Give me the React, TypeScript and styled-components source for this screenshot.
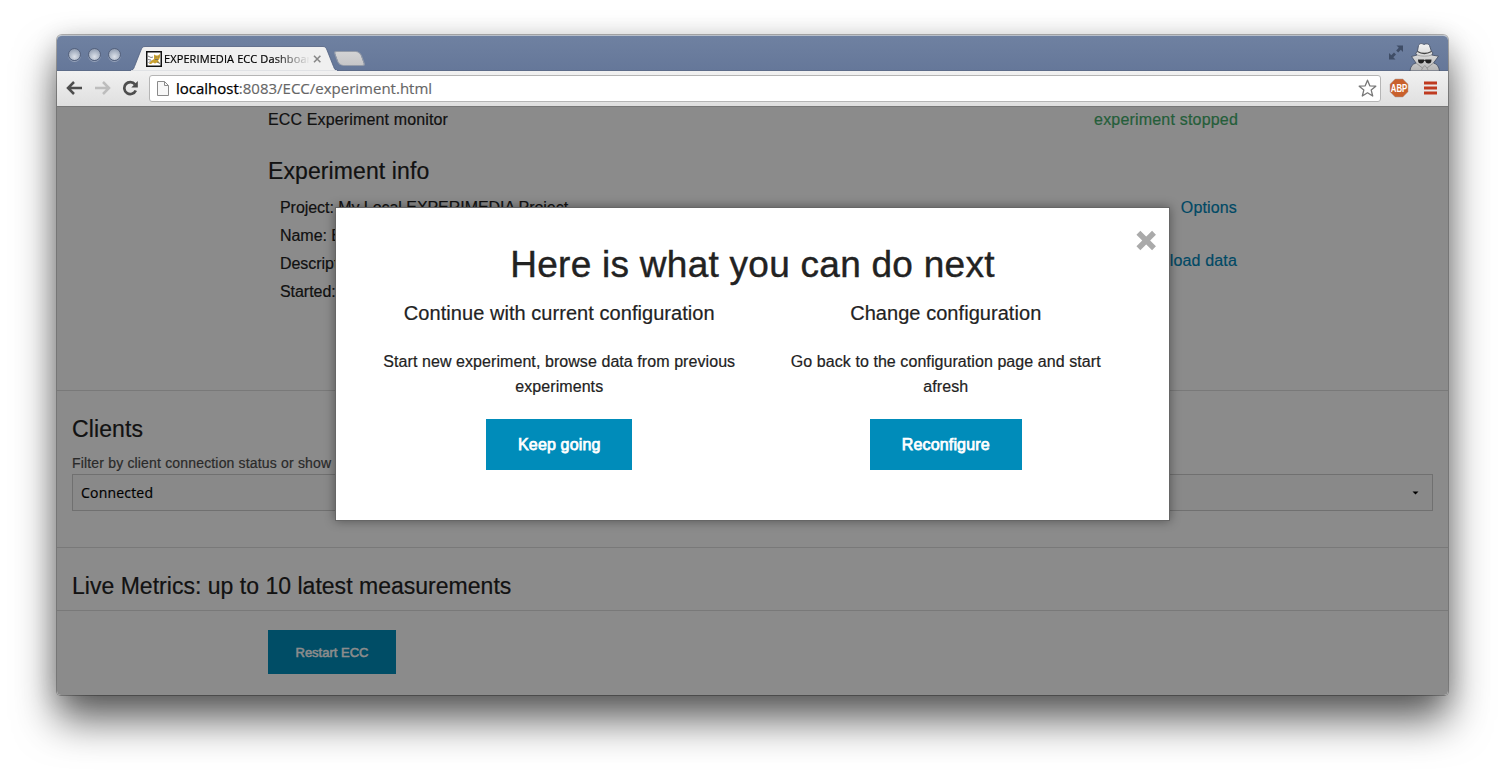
import React from 'react';
import styled, { createGlobalStyle } from 'styled-components';

const helvetica = `'Liberation Sans', Arial, sans-serif`;
const lucida = `'Open Sans', sans-serif`;

const GlobalStyle = createGlobalStyle`
  * { box-sizing: border-box; }
  body { margin: 0; background: #fff; overflow: hidden; font-family: ${helvetica}; }
`;

const Desktop = styled.div`
  width: 1505px;
  height: 774px;
  padding: 35px 57px 0;
  overflow: hidden;
`;

const Window = styled.div`
  display: flex;
  flex-direction: column;
  width: 1391px;
  height: 660px;
  border-radius: 5px 5px 4px 4px;
  box-shadow: 0 0 0 1px rgba(0, 0, 0, 0.28), 0 25px 42px rgba(0, 0, 0, 0.62), 0 4px 26px rgba(0, 0, 0, 0.16);
`;

const TitleBar = styled.div`
  display: flex;
  height: 36px;
  flex: none;
  border-radius: 5px 5px 0 0;
  border-top: 1px solid #b9c0ca;
  background: linear-gradient(#6f81a1, #657799);
  box-shadow: inset 0 -1px 0 #5d6c89;
`;

const Lights = styled.div`
  display: flex;
  gap: 7px;
  padding: 12px 0 0 11px;
  width: 73px;
`;

const Light = styled.i`
  width: 13px;
  height: 13px;
  border-radius: 50%;
  border: 1px solid #55627d;
  background: radial-gradient(circle at 50% 70%, #dce1e9 0, #abb5c5 55%, #7f8ba2 100%);
  box-shadow: 0 1px 0 rgba(255, 255, 255, 0.3);
`;

const Tab = styled.div`
  position: relative;
  width: 208px;
  height: 35px;
`;

const TabShape = styled.svg`
  position: absolute;
  left: 0;
  top: 10px;
`;

const TabContent = styled.div`
  position: relative;
  display: flex;
  align-items: center;
  padding: 14px 0 0 16px;
  height: 31px;
`;

const TabTitle = styled.span`
  width: 145px;
  margin-left: 2px;
  overflow: hidden;
  white-space: nowrap;
  font: 11px/17px ${lucida};
  letter-spacing: 0.1px;
  color: #000;
  -webkit-text-stroke: 0.2px #000;
  mask-image: linear-gradient(90deg, #000 110px, transparent 146px);
`;

const NewTab = styled.div`
  width: 27px;
  height: 15px;
  margin: 15px 0 0 -2px;
  border: 1px solid #949ba8;
  border-radius: 3px 5px 3px 5px;
  background: linear-gradient(#d3d3d4, #c6c6c8);
  transform: skewX(20deg);
`;

const TitleRight = styled.div`
  display: flex;
  margin-left: auto;
  padding: 7px 7px 0 0;
  gap: 4px;
`;

const ToolBar = styled.div`
  display: flex;
  align-items: center;
  height: 36px;
  flex: none;
  padding: 0 10px 1px 9px;
  background: linear-gradient(#f1f1f1, #dfdfdf);
  border-bottom: 1px solid #777;
`;

const NavIcons = styled.div`
  display: flex;
  gap: 11px;
  width: 83px;
`;

const UrlBox = styled.div`
  display: flex;
  align-items: center;
  width: 1232px;
  height: 27px;
  padding: 0 3px 0 7px;
  border: 1px solid #b5b5b5;
  border-radius: 3px;
  background: #fff;
`;

const Url = styled.span`
  margin-left: 7px;
  flex: 1;
  font: 15px/24px ${lucida};
  color: #666;
  -webkit-text-stroke: 0.15px #666;
  b { font-weight: 400; color: #000; -webkit-text-stroke: 0.25px #000; }
`;

const Extensions = styled.div`
  display: flex;
  align-items: center;
  margin-left: 8px;
  gap: 15px;
`;

const Page = styled.main`
  position: relative;
  flex: 1;
  overflow: hidden;
  border-radius: 0 0 4px 4px;
  background: #fefefe;
  color: #222;
  -webkit-text-stroke-width: 0.2px;
`;

const Section = styled.section<{ $h: number; $line?: boolean }>`
  display: flow-root;
  height: ${p => p.$h}px;
  padding: 0 15px;
  border-bottom: ${p => (p.$line === false ? 'none' : '1px solid #ddd')};
`;

const Row = styled.div`
  width: 999px;
  margin: 0 auto;
  padding: 0 14px 0 15px;
`;

const StatusBar = styled.div`
  display: flex;
  justify-content: space-between;
  font-size: 16px;
  line-height: 25px;
  letter-spacing: 0.14px;
`;

const Status = styled.span`
  color: #43ac6a;
  letter-spacing: 0.19px;
`;

const Heading = styled.h4<{ $mt: number; $ls?: number }>`
  margin: ${p => p.$mt}px 0 0;
  font-weight: 400;
  font-size: 23px;
  line-height: 32px;
  letter-spacing: ${p => p.$ls ?? 0.1}px;
`;

const InfoGrid = styled.div`
  display: flex;
  justify-content: space-between;
  margin-top: 7px;
  padding-left: 12px;
  font-size: 16px;
`;

const InfoList = styled.div`
  line-height: 28px;
  letter-spacing: -0.05px;
`;

const Links = styled.div`
  display: flex;
  flex-direction: column;
  align-items: flex-end;
  gap: 25px;
  padding-right: 1px;
  line-height: 28px;
  letter-spacing: 0.15px;
  color: #0086b8;
`;

const Label = styled.div`
  margin-top: 7px;
  font-size: 14px;
  line-height: 22px;
  letter-spacing: 0.17px;
  color: #4d4d4d;
`;

const Select = styled.div`
  display: flex;
  align-items: center;
  justify-content: space-between;
  height: 37px;
  padding: 0 13px 0 8px;
  border: 1px solid #ccc;
  background: #fafafa;
  color: #000;
  font: 14px/20px ${lucida};
  letter-spacing: 0.2px;
`;

const Button = styled.button<{ $small?: boolean }>`
  display: block;
  height: ${p => (p.$small ? 44 : 51)}px;
  padding: 0 ${p => (p.$small ? 27.5 : 32)}px;
  border: 0;
  background: #008cba;
  color: #fff;
  font: ${p => (p.$small ? 13 : 16)}px ${helvetica};
  letter-spacing: ${p => (p.$small ? 0 : 0.15)}px;
  -webkit-text-stroke: ${p => (p.$small ? 0.5 : 0.75)}px #fff;
`;

const Footer = styled.div`
  padding-top: 19px;
`;

const Overlay = styled.div`
  position: absolute;
  inset: 0;
  background: rgba(0, 0, 0, 0.45);
`;

const Modal = styled.div`
  position: absolute;
  left: 278px;
  top: 100px;
  width: 835px;
  height: 314px;
  padding: 35px 30px 0;
  background: #fff;
  border: 1px solid #666;
  box-shadow: 0 0 10px rgba(0, 0, 0, 0.4);
  text-align: center;
`;

const ModalTitle = styled.h2`
  margin: 0;
  font-weight: 400;
  font-size: 37px;
  line-height: 44px;
  letter-spacing: 0.26px;
  -webkit-text-stroke-width: 0.4px;
`;

const Close = styled.svg`
  position: absolute;
  right: 12px;
  top: 22px;
`;

const Columns = styled.div`
  display: grid;
  grid-template-columns: 1fr 1fr;
`;

const Option = styled.div`
  display: flex;
  flex-direction: column;
  align-items: center;
  h5 {
    margin: 12px 0 22px;
    font-weight: 400;
    font-size: 20px;
    line-height: 28px;
    letter-spacing: 0.05px;
  }
  p {
    margin: 0 0 20px;
    width: 357px;
    font-size: 16px;
    line-height: 25px;
    letter-spacing: 0.07px;
  }
`;

const options = [
  { title: 'Continue with current configuration', text: 'Start new experiment, browse data from previous experiments', action: 'Keep going' },
  { title: 'Change configuration', text: 'Go back to the configuration page and start afresh', action: 'Reconfigure' },
];

const Favicon = () => (
  <svg width="16" height="16" viewBox="0 0 16 16">
    <rect x=".75" y=".75" width="14.5" height="14.5" fill="#fff" stroke="#111" strokeWidth="1.5" />
    <path d="M3 13l2-3 3-2V3.500l2 1h2l2-1.500v3L13 8.500l-1 1 2 3-3-1-2 1-2-1-2 1.500z" fill="#c9a02e" />
    <path d="M2 5l3 1.500L7 6M2 8.500l3 .5M2.500 12L5 9.500M9.500 6h1M12 6h.8M9 8.500h3M11 11l3 1.500" stroke="#666" strokeWidth=".8" fill="none" />
  </svg>
);

const Incognito = () => (
  <svg width="32" height="28" viewBox="0 0 32 28">
    <defs>
      <linearGradient id="coat" x1="0" y1="0" x2="0" y2="1">
        <stop offset="0" stopColor="#f4f4f4" />
        <stop offset="1" stopColor="#b4b4b4" />
      </linearGradient>
    </defs>
    <path d="M1 28c.3-4.500 2.500-7 6-8L2.500 13.500 8 12l-1.500-2 1.800-1.200L9.500 2.500C11-.3 13 .5 15 1.500c2-1 4.500-1.200 5.500 1L22.500 8.500l1.500 1.300L22.800 12l6.700 1.200L24.500 20c3.500 1 5.500 3.500 6 8z" fill="url(#coat)" stroke="#4a5468" strokeWidth=".9" />
    <path d="M8.500 8.500c4 2.400 9.500 2.400 14 0" stroke="#444" strokeWidth="1.300" fill="none" />
    <path d="M8 12c4 1.600 11 1.600 15 0" stroke="#999" strokeWidth=".8" fill="none" />
    <path d="M9 16.500h5.800l.9.600.9-.6h5.900c0 3-1 4-3 4s-3-1.200-3.300-2.700h-1c-.3 1.500-1.200 2.700-3.200 2.700s-3-1-3-4z" fill="#222" />
    <path d="M7 20l6.500 5 2.300-2.500L18 25l6.500-5M12 28l1.500-3M19.500 28L18 25" stroke="#8a8a8a" strokeWidth=".8" fill="none" />
  </svg>
);

export default function App() {
  return (
    <Desktop>
      <GlobalStyle />
      <Window>
        <TitleBar>
          <Lights><Light /><Light /><Light /></Lights>
          <Tab>
            <TabShape width="208" height="25" viewBox="0 0 208 25">
              <path d="M0 24.500c3 0 3.500-1.500 4.500-4L11 4c1-2.500 2-3.500 4-3.500h178c2 0 3 1 4 3.500l6.500 16.500c1 2.500 1.500 4 4.500 4V25H0z" fill="#f0f0f0" stroke="#50607f" strokeWidth=".8" />
              <path d="M1 25h206" stroke="#f0f0f0" strokeWidth="1.500" />
            </TabShape>
            <TabContent>
              <Favicon />
              <TabTitle>EXPERIMEDIA ECC Dashboard</TabTitle>
              <svg width="16" height="8" viewBox="0 0 16 8"><path d="M5 .8l6.400 6.400M11.400.8L5 7.200" stroke="#888" strokeWidth="1.600" /></svg>
            </TabContent>
          </Tab>
          <NewTab />
          <TitleRight>
            <svg width="18" height="18" viewBox="0 0 18 18" fill="#3f4d66">
              <path d="M9.500 2.500H16V9l-2.200-2.200-2.600 2.600-2-2 2.600-2.600z" />
              <path d="M2 10v6.500h6.500l-2.200-2.200L9 11.600l-2-2-2.700 2.600z" />
            </svg>
            <Incognito />
          </TitleRight>
        </TitleBar>
        <ToolBar>
          <NavIcons>
            <svg width="17" height="16" viewBox="0 0 17 16" fill="none" stroke="#4d4d4d" strokeWidth="2.500"><path d="M8 2L2 8l6 6M2.500 8H16" /></svg>
            <svg width="17" height="16" viewBox="0 0 17 16" fill="none" stroke="#bdbdbd" strokeWidth="2.500"><path d="M9 2l6 6-6 6M14.500 8H1" /></svg>
            <svg width="17" height="16" viewBox="0 0 17 16"><path d="M13.800 10.500A6 6 0 1 1 13 4.300" fill="none" stroke="#4d4d4d" strokeWidth="2.700" /><path d="M15.800 1v6.500H9.300z" fill="#4d4d4d" /></svg>
          </NavIcons>
          <UrlBox>
            <svg width="12" height="15" viewBox="0 0 12 15"><path d="M.5.500h7l4 4v10H.5z" fill="#f7f7f7" stroke="#8a8a8a" /><path d="M7.500.500v4h4" fill="none" stroke="#8a8a8a" /></svg>
            <Url><b>localhost</b>:8083/ECC/experiment.html</Url>
            <svg width="19" height="18" viewBox="0 0 19 18"><path d="M9.500 1.200l2.300 5.600 6 .4-4.600 3.900 1.500 5.900-5.200-3.200L4.300 17l1.500-5.900L1.200 7.200l6-.4z" fill="#fff" stroke="#777" strokeWidth="1.300" strokeLinejoin="round" /></svg>
          </UrlBox>
          <Extensions>
            <svg width="20" height="20" viewBox="0 0 20 20">
              <path d="M6.200 1h7.600L19 6.200v7.600L13.800 19H6.200L1 13.800V6.200z" fill="#c9602c" stroke="#a99" strokeWidth=".5" />
              <text x="10" y="13.800" textAnchor="middle" fontFamily="Liberation Sans" fontWeight="700" fontSize="10.500" textLength="16.500" lengthAdjust="spacingAndGlyphs" fill="#fff">ABP</text>
            </svg>
            <svg width="13" height="14" viewBox="0 0 13 14"><path d="M0 2h13M0 7h13M0 12h13" stroke="#bf3a20" strokeWidth="2.800" /></svg>
          </Extensions>
        </ToolBar>
        <Page>
          <Section $h={284}>
            <Row>
              <StatusBar><span>ECC Experiment monitor</span><Status>experiment stopped</Status></StatusBar>
              <Heading $mt={23}>Experiment info</Heading>
              <InfoGrid>
                <InfoList>
                  <div>Project: My Local EXPERIMEDIA Project</div>
                  <div>Name: Experiment</div>
                  <div>Description:</div>
                  <div>Started:</div>
                </InfoList>
                <Links><span>Options</span><span>Download data</span></Links>
              </InfoGrid>
            </Row>
          </Section>
          <Section $h={157}>
            <Heading $mt={22}>Clients</Heading>
            <Label>Filter by client connection status or show all</Label>
            <Select>
              Connected
              <svg width="7" height="4" viewBox="0 0 7 4"><path d="M.5.500h6L3.500 3.500z" fill="#000" /></svg>
            </Select>
          </Section>
          <Section $h={63}>
            <Heading $mt={22} $ls={0.02}>Live Metrics: up to 10 latest measurements</Heading>
          </Section>
          <Section $h={84} $line={false}>
            <Row>
              <Footer><Button $small>Restart ECC</Button></Footer>
            </Row>
          </Section>
          <Overlay />
          <Modal>
            <ModalTitle>Here is what you can do next</ModalTitle>
            <Columns>
              {options.map(o => (
                <Option key={o.action}>
                  <h5>{o.title}</h5>
                  <p>{o.text}</p>
                  <Button>{o.action}</Button>
                </Option>
              ))}
            </Columns>
            <Close width="21" height="21" viewBox="0 0 21 21"><path d="M2.400 2.700l15.600 15.600M18 2.700L2.400 18.300" stroke="#aaa" strokeWidth="5.500" /></Close>
          </Modal>
        </Page>
      </Window>
    </Desktop>
  );
}
